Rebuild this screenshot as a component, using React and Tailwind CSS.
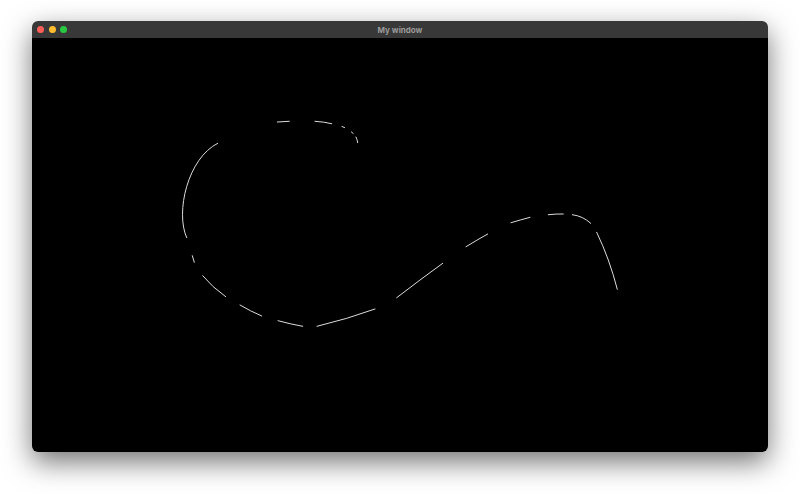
import React from 'react';

// visible pieces of the stroke, in page coordinates
const strokes = [
  'M356,137 Q357.3,139.6 357.7,142.7',
  'M351.4,132 L353.2,133.4',
  'M342,126.5 L344.6,127.6',
  'M315,121.3 Q324,121.8 331.7,123.7',
  'M277.3,122 L289.3,121.3',
  'M217.7,143.3 C188,158 175,212 186.7,237.7',
  'M192.3,255.7 L194.3,262.3',
  'M202.7,275.7 Q212,287 225.7,296.7',
  'M240,305 Q250,311 261.7,316',
  'M278,320.7 Q290,324 302.7,326.3',
  'M317,326.3 Q347.4,319 375,309',
  'M396.7,297.7 Q420.3,279.5 442.7,263.3',
  'M466,246.7 Q477,240 487.7,234',
  'M511,222.7 Q520,220 530,217.3',
  'M548.3,214.7 Q556,213.8 563.3,214',
  'M572.3,214.7 Q583,216 590.7,223.3',
  'M596.7,232.3 Q609.6,259.2 617.3,289.3',
];

function TrafficLights() {
  return (
    <div className="flex items-center gap-[4.5px] pl-[5px]">
      <span className="h-[7px] w-[7px] rounded-full bg-[#fe5f57]" />
      <span className="h-[7px] w-[7px] rounded-full bg-[#febc2e]" />
      <span className="h-[7px] w-[7px] rounded-full bg-[#28c840]" />
    </div>
  );
}

export default function App() {
  return (
    <div className="h-[494px] w-[800px] overflow-hidden bg-white pl-[32px] pt-[21px]">
      <div className="flex h-[431px] w-[736px] flex-col overflow-hidden rounded-[6px] shadow-[0_10px_28px_rgba(0,0,0,0.55)]">
        <div className="grid h-[17px] shrink-0 grid-cols-[1fr_auto_1fr] items-center bg-[#383838]">
          <TrafficLights />
          <span className="text-[8px] font-bold leading-none text-[#9a9a9a]" style={{ fontFamily: 'Inter, "Liberation Sans", sans-serif' }}>
            My window
          </span>
          <div />
        </div>
        <div className="flex-1 bg-black">
          <svg width="736" height="414" viewBox="32 38 736 414" className="block">
            {strokes.map((d, i) => (
              <path key={i} d={d} fill="none" stroke="#dcdcdc" strokeWidth="1" strokeLinecap="round" />
            ))}
          </svg>
        </div>
      </div>
    </div>
  );
}
